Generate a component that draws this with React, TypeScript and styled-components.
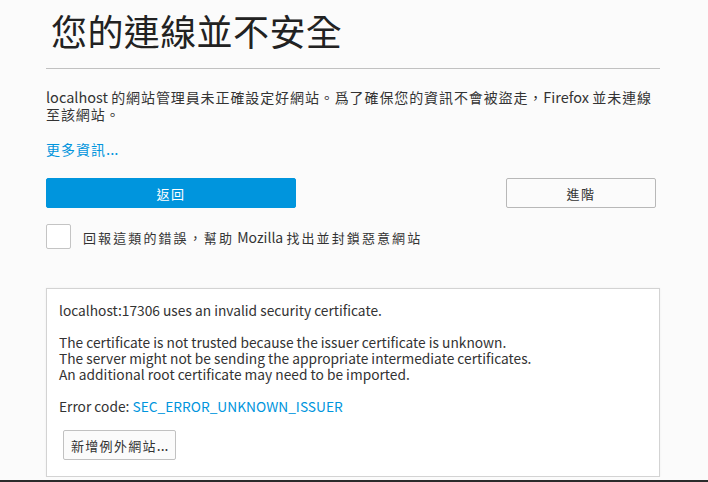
import React from "react";
import styled, { createGlobalStyle } from "styled-components";

const Global = createGlobalStyle`
  html, body { margin: 0; padding: 0; background: #fbfbfb; }
  body {
    font-family: "Noto Sans CJK TC", "Noto Sans", sans-serif;
    color: #333;
    overflow: hidden;
  }
`;

const HanRun = styled.span`
  font-size: var(--han-size, inherit);
  letter-spacing: var(--han-track, 0);
`;

const HAN = /([\u3000-\u303f\u3400-\u9fff\uff00-\uffef]+)/;

function Mixed({ text }: { text: string }) {
  const parts = text.split(HAN);
  return (
    <>
      {parts.map((p, i) =>
        i % 2 === 1 ? <HanRun key={i}>{p}</HanRun> : <React.Fragment key={i}>{p}</React.Fragment>
      )}
    </>
  );
}

const Page = styled.div`
  width: 614px;
  padding: 0 0 0 46px;
  display: flex;
  flex-direction: column;
`;

const Title = styled.h1`
  margin: 0;
  padding-top: 7px;
  padding-left: 5px;
  font-size: 36px;
  line-height: 46px;
  font-weight: 400;
  letter-spacing: 0.4px;
  color: #222;
`;

const Rule = styled.div`
  height: 1px;
  background: #c1c1c1;
  margin-top: 15px;
`;

const Para = styled.p`
  margin: 20px 0 0;
  font-size: 14.5px;
  line-height: 16.5px;
  color: #333;
  white-space: nowrap;
  --han-size: 14px;
  --han-track: 0.9px;
`;

const More = styled.a`
  margin-top: 18px;
  font-size: 15px;
  line-height: 17px;
  color: #0095dd;
  text-decoration: none;
  --han-size: 14px;
  --han-track: 1px;
`;

const Buttons = styled.div`
  margin-top: 20px;
  display: flex;
  justify-content: space-between;
  align-items: center;
  padding-right: 4px;
`;

const Button = styled.button<{ $primary?: boolean }>`
  height: 30px;
  width: ${(p) => (p.$primary ? "250px" : "150px")};
  border-radius: 2px;
  border: 1px solid ${(p) => (p.$primary ? "#0095dd" : "#b8b8b8")};
  background: ${(p) => (p.$primary ? "#0095dd" : "#fbfbfb")};
  color: ${(p) => (p.$primary ? "#fff" : "#333")};
  font-family: inherit;
  font-size: 13px;
  letter-spacing: 1.5px;
  padding: 0;
`;

const CheckRow = styled.label`
  margin-top: 16px;
  display: flex;
  align-items: center;
  gap: 12px;
  font-size: 14px;
  color: #333;
  --han-size: 13px;
  --han-track: 2.1px;
`;

const Box = styled.span`
  width: 23px;
  height: 23px;
  flex: none;
  border: 1px solid #c4c4c4;
  border-radius: 2px;
  background: #fff;
`;

const Details = styled.div`
  margin-top: 39px;
  border: 1px solid #d3d3d3;
  box-shadow: 0 0 2px rgba(0, 0, 0, 0.06);
  background: #fff;
  padding: 13px 12px 16px;
  display: flex;
  flex-direction: column;
  align-items: flex-start;
`;

const Text = styled.div`
  font-size: 13.75px;
  line-height: 16px;
  color: #333;
  white-space: pre-line;
`;

const Code = styled.span`
  color: #0095dd;
`;

const Exception = styled.button`
  margin-top: 16px;
  margin-left: 4px;
  height: 30px;
  padding: 0 6px 0 7px;
  border: 1px solid #c1c1c1;
  border-radius: 2px;
  background: #fbfbfb;
  color: #333;
  font-family: inherit;
  font-size: 14px;
  --han-size: 13px;
  --han-track: 1.3px;
`;

const BottomEdge = styled.div`
  position: fixed;
  left: 0;
  right: 0;
  bottom: 0;
  height: 2px;
  background: #2b2b2b;
`;

export default function App() {
  return (
    <>
      <Global />
      <Page>
        <Title>您的連線並不安全</Title>
        <Rule />
        <Para>
          <Mixed text="localhost 的網站管理員未正確設定好網站。爲了確保您的資訊不會被盜走，Firefox 並未連線" />
          <br />
          <Mixed text="至該網站。" />
        </Para>
        <More href="#">
          <Mixed text="更多資訊..." />
        </More>
        <Buttons>
          <Button $primary>返回</Button>
          <Button>進階</Button>
        </Buttons>
        <CheckRow>
          <Box />
          <span>
            <Mixed text="回報這類的錯誤，幫助 Mozilla 找出並封鎖惡意網站" />
          </span>
        </CheckRow>
        <Details>
          <Text>
            {"localhost:17306 uses an invalid security certificate.\n\nThe certificate is not trusted because the issuer certificate is unknown.\nThe server might not be sending the appropriate intermediate certificates.\nAn additional root certificate may need to be imported.\n\nError code: "}
            <Code>SEC_ERROR_UNKNOWN_ISSUER</Code>
          </Text>
          <Exception>
            <Mixed text="新增例外網站..." />
          </Exception>
        </Details>
      </Page>
      <BottomEdge />
    </>
  );
}
